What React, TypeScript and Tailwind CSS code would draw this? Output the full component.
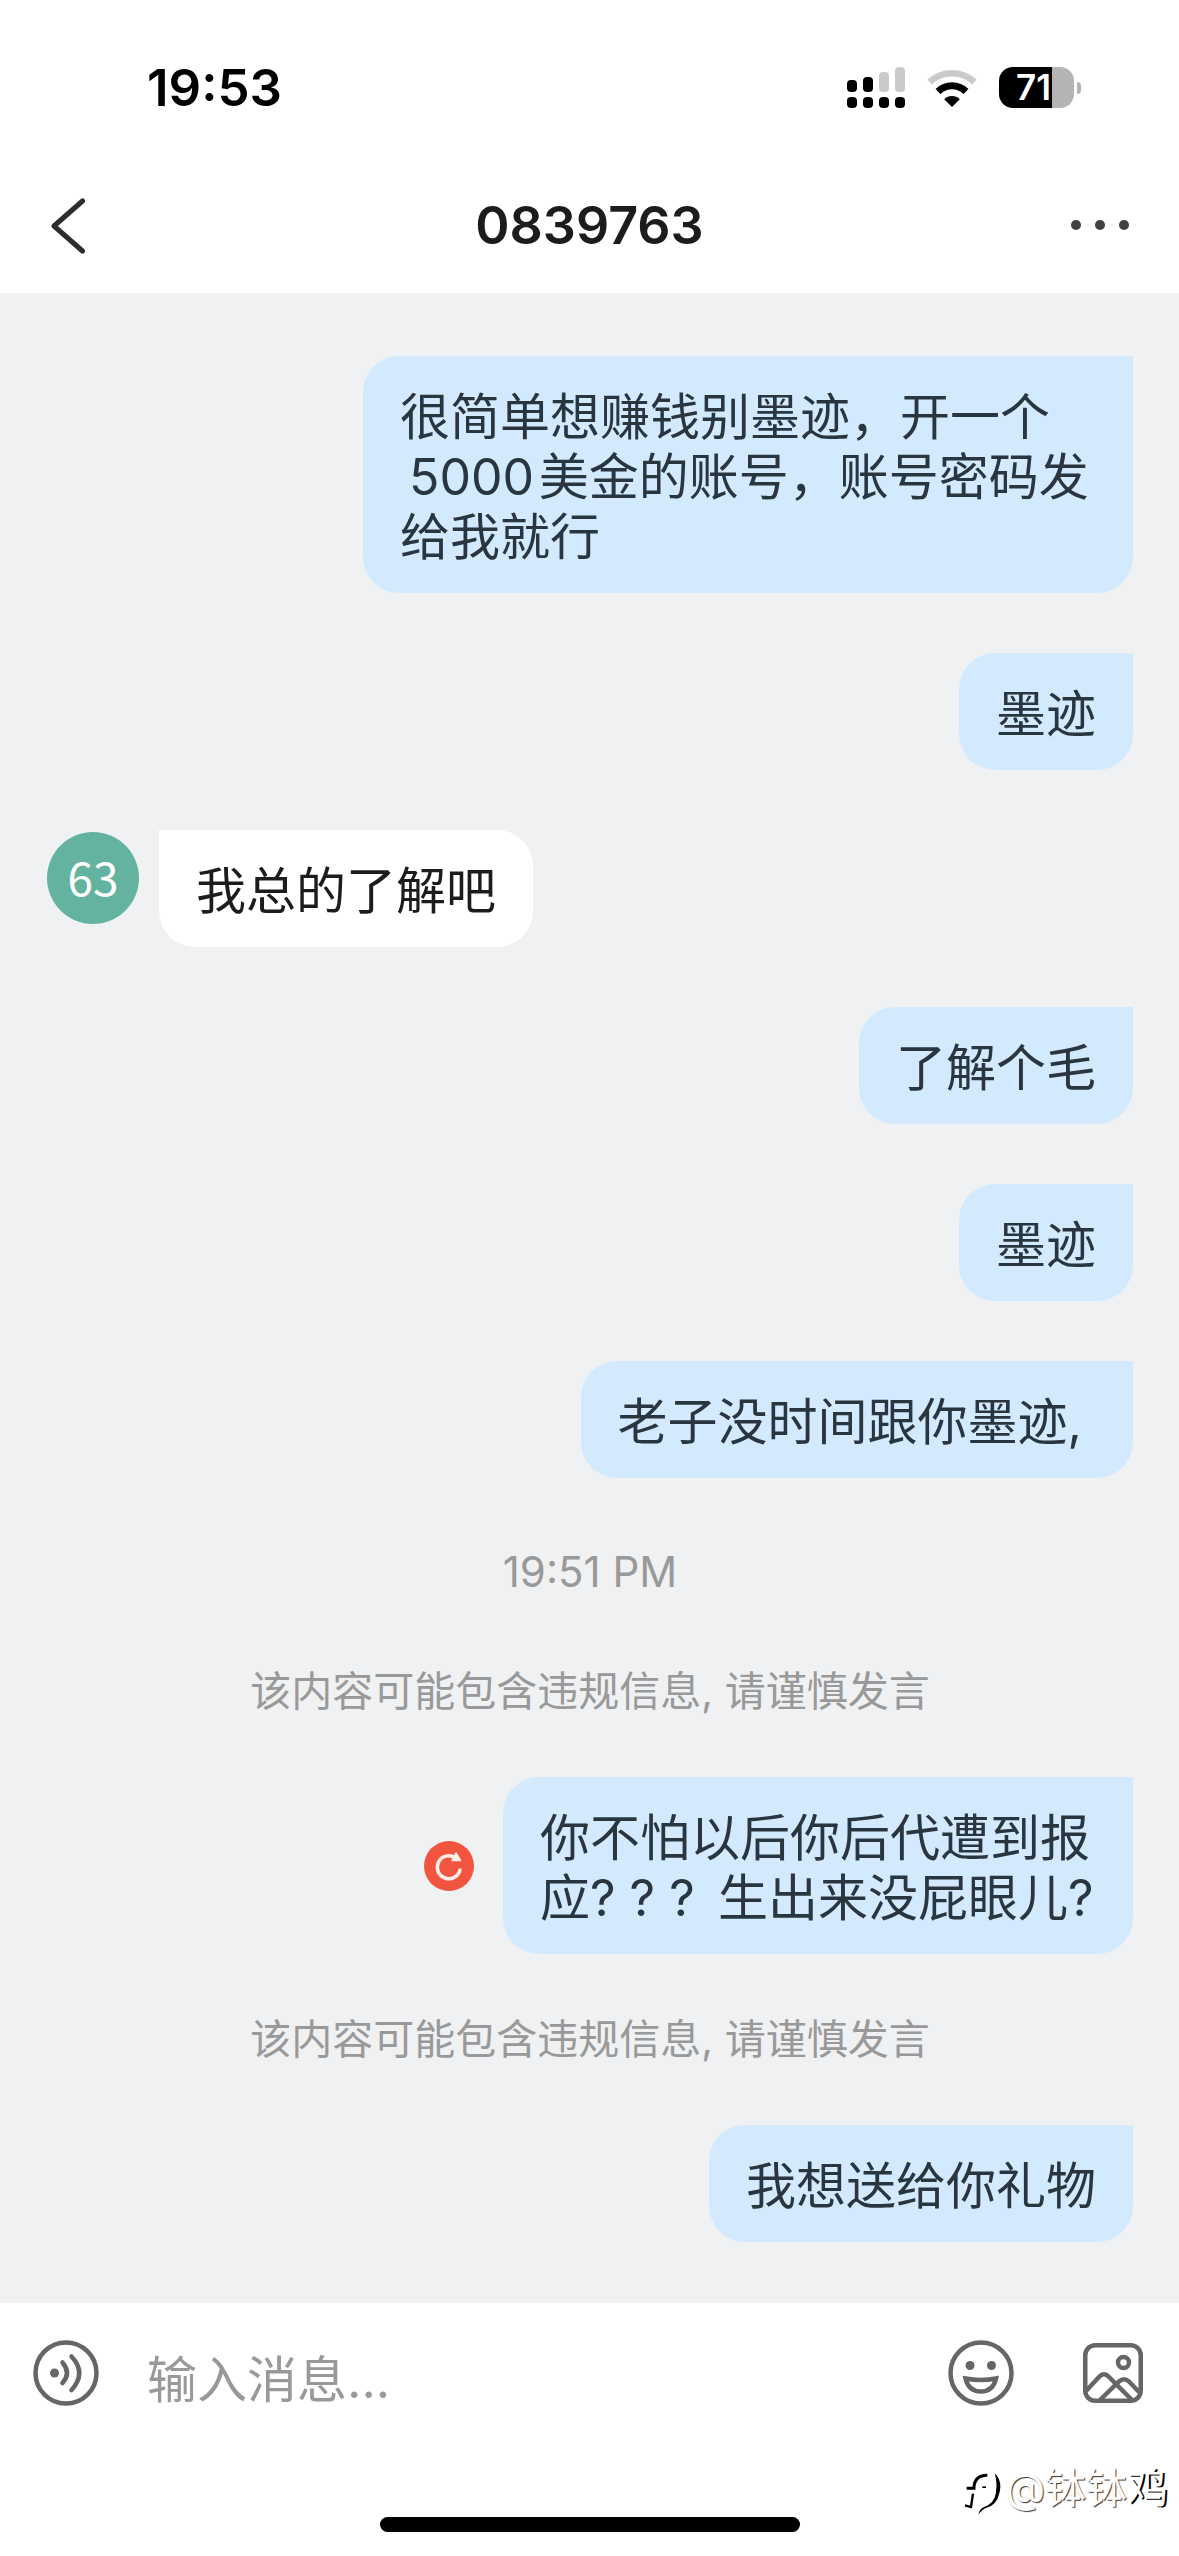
import React from "react";

type Entry =
  | { kind: "out"; text: string; failed?: boolean }
  | { kind: "in"; avatar: string; text: string }
  | { kind: "time"; text: string }
  | { kind: "notice"; text: string };

const entries: Entry[] = [
  {
    kind: "out",
    text: "很简单想赚钱别墨迹，开一个\u200b\u202f5000\u200a美金的账号，账号密码发给我就行",
  },
  { kind: "out", text: "墨迹" },
  { kind: "in", avatar: "63", text: "我总的了解吧" },
  { kind: "out", text: "了解个毛" },
  { kind: "out", text: "墨迹" },
  { kind: "out", text: "老子没时间跟你墨迹,\u00a0" },
  { kind: "time", text: "19:51 PM" },
  { kind: "notice", text: "该内容可能包含违规信息, 请谨慎发言" },
  { kind: "out", text: "你不怕以后你后代遭到报应? ? ? \u2009生出来没屁眼儿?", failed: true },
  { kind: "notice", text: "该内容可能包含违规信息, 请谨慎发言" },
  { kind: "out", text: "我想送给你礼物" },
];

function Signal() {
  return (
    <svg width="58" height="41" viewBox="0 0 58 41" aria-hidden="true">
      <rect x="0" y="13" width="10" height="12" rx="4" />
      <rect x="16" y="10" width="10" height="15" rx="4" />
      <rect x="32" y="5" width="10" height="20" rx="4" fill="#cacaca" />
      <rect x="48" y="0" width="10" height="25" rx="4" fill="#cacaca" />
      {[0, 16, 32, 48].map((x) => (
        <rect key={x} x={x} y="30" width="10" height="11" rx="4" />
      ))}
    </svg>
  );
}

function Wifi() {
  return (
    <svg width="50" height="38" viewBox="0 0 50 38" fill="none" aria-hidden="true">
      <path d="M2.500 13A33 33 0 0 1 47.500 13" stroke="#cacaca" strokeWidth="6.500" />
      <path d="M11 22.500A20 20 0 0 1 39 22.500" stroke="#000" strokeWidth="7" />
      <path d="M25 38L17.200 30.200A11 11 0 0 1 32.800 30.200Z" fill="#000" />
    </svg>
  );
}

function Battery() {
  return (
    <div className="flex items-center gap-[3px]">
      <div className="flex h-[41px] w-[75px] items-center overflow-hidden rounded-[14px] bg-[linear-gradient(90deg,#000_53px,#b4b4b4_53px)] pl-[17px] text-[35px] leading-none font-semibold text-white">
        71
      </div>
      <div className="h-3 w-1 rounded-r-full bg-[#b4b4b4]" />
    </div>
  );
}

function Retry() {
  return (
    <button aria-label="重新发送" className="shrink-0 rounded-full">
      <svg width="50" height="50" viewBox="0 0 50 50" fill="none">
        <circle cx="25" cy="25" r="25" fill="#f2553f" />
        <path d="M31 16.500A11.500 11.500 0 1 0 36 29" stroke="#fdeee8" strokeWidth="3.500" strokeLinecap="round" />
        <path d="M32 12L36.500 19.500H28Z" fill="#fdeee8" stroke="#fdeee8" strokeWidth="1.500" strokeLinejoin="round" />
      </svg>
    </button>
  );
}

function Message({ entry }: { entry: Entry }) {
  if (entry.kind === "time") {
    return <p className="text-center text-[42px] leading-[68px] text-[#999]">{entry.text}</p>;
  }
  if (entry.kind === "notice") {
    return <p className="text-center text-[41px] leading-[51px] text-[#999]">{entry.text}</p>;
  }
  if (entry.kind === "in") {
    return (
      <div className="flex items-start gap-5">
        <div className="mt-0.5 flex size-[92px] shrink-0 items-center justify-center rounded-full bg-[#63b3a0] pb-1 font-[Noto_Sans_CJK_SC] text-[46px] leading-none text-white">
          {entry.avatar}
        </div>
        <p className="max-w-[770px] rounded-[36px] rounded-tl-none bg-white px-[37px] pt-[31px] pb-[26px] text-[50px] leading-[60px] text-[#1a1c1e]">
          {entry.text}
        </p>
      </div>
    );
  }
  return (
    <div className="flex items-center justify-end gap-[29px]">
      {entry.failed && <Retry />}
      <p
        className={`${entry.failed ? "max-w-[630px]" : "max-w-[770px]"} rounded-[36px] rounded-tr-none bg-[#d2e9fe] px-[37px] pt-[31px] pb-[26px] text-[50px] leading-[60px] text-[#29353f]`}
      >
        {entry.text}
      </p>
    </div>
  );
}

export default function App() {
  return (
    <div className="relative flex min-h-screen flex-col bg-white font-[Inter,Noto_Sans_CJK_SC,sans-serif]">
      <header>
        <div className="flex h-[175px] items-center justify-between pr-[98px] pl-[147px]">
          <time className="text-[51px] leading-none font-semibold text-black">19:53</time>
          <div className="flex items-center gap-[22px]">
            <Signal />
            <Wifi />
            <Battery />
          </div>
        </div>
        <div className="grid h-[118px] grid-cols-[1fr_auto_1fr] items-start px-[50px]">
          <button aria-label="返回" className="mt-[23px] justify-self-start">
            <svg width="36" height="56" viewBox="0 0 36 56" fill="none" stroke="#2c2d2e" strokeWidth="5" strokeLinecap="round" strokeLinejoin="round">
              <path d="M32.500 3L4 28L32.500 53" />
            </svg>
          </button>
          <h1 className="mt-5 text-[52px] leading-[62px] font-semibold text-[#1a1c1e]">0839763</h1>
          <button aria-label="更多" className="mt-[45px] flex gap-[14px] justify-self-end">
            <span className="size-[10px] rounded-full bg-[#404142]" />
            <span className="size-[10px] rounded-full bg-[#404142]" />
            <span className="size-[10px] rounded-full bg-[#404142]" />
          </button>
        </div>
      </header>

      <main className="flex flex-1 flex-col gap-[60px] bg-[#eff1f3] pt-[63px] pr-[46px] pb-[60px] pl-[47px]">
        {entries.map((entry, i) => (
          <Message key={i} entry={entry} />
        ))}
      </main>

      <footer className="flex h-[253px] flex-col items-center justify-between pt-[31px] pb-6">
        <form className="flex w-full items-center pr-9 pl-[33px]" onSubmit={(e) => e.preventDefault()}>
          <button type="button" aria-label="语音">
            <svg width="66" height="66" viewBox="0 0 66 66" fill="none" stroke="#666" strokeWidth="4.500" strokeLinecap="round">
              <circle cx="33" cy="33" r="30.500" />
              <circle cx="21.500" cy="33" r="4.500" fill="#666" stroke="none" />
              <path d="M29.500 22.500Q38.500 33 29.500 43" />
              <path d="M38.500 16.500Q54 33 38.500 50" />
            </svg>
          </button>
          <input
            aria-label="输入消息"
            placeholder="输入消息..."
            className="ml-12 h-[78px] min-w-0 flex-1 pt-3.5 text-[50px] text-[#1a1c1e] outline-none placeholder:text-[#999]"
          />
          <button type="button" aria-label="表情">
            <svg width="66" height="66" viewBox="0 0 66 66" fill="none" stroke="#666" strokeWidth="4.500">
              <circle cx="33" cy="33" r="30.500" />
              <circle cx="22" cy="25.500" r="4.500" fill="#666" stroke="none" />
              <circle cx="43.500" cy="25.500" r="4.500" fill="#666" stroke="none" />
              <path d="M17.500 38.500Q33 41.500 48 38.500Q45 51.500 33 51.500Q20.500 51.500 17.500 38.500Z" />
            </svg>
          </button>
          <button type="button" aria-label="图片" className="ml-[69px]">
            <svg width="60" height="60" viewBox="0 0 60 60" fill="none" stroke="#666" strokeWidth="4.500">
              <rect x="2.250" y="2.250" width="55.500" height="55.500" rx="10" />
              <circle cx="40.500" cy="19.500" r="5.500" />
              <path d="M3 48L16 34Q21 28.500 26 34L49 57" />
              <path d="M17 57L36 38.500Q41 34 46 38.500L57 50" />
            </svg>
          </button>
        </form>
        <div className="h-[15px] w-[420px] rounded-full bg-black" />
      </footer>

      <div className="absolute right-[11px] bottom-[40px] flex items-center gap-1 text-[41px] leading-[56px] text-white [text-shadow:1px_1px_1px_#333]">
        <svg className="mt-3" width="37" height="45" viewBox="30 55 111 135" fill="none" aria-hidden="true">
          <path d="M38 107H60Q60 68 100 68" stroke="#000" strokeWidth="9" />
          <path d="M122 62Q146 84 136 122Q128 158 98 165Q84 170 73 186Q76 168 92 162Q120 152 125 124Q131 88 122 62Z" fill="#000" />
          <path d="M57 123L51 163L33 158" stroke="#000" strokeWidth="7" />
          <rect x="85" y="101" width="11" height="5" fill="#000" />
        </svg>
        <span>
          @钵钵<span className="[text-shadow:2px_1px_0_#000]">鸡</span>
        </span>
      </div>
    </div>
  );
}
